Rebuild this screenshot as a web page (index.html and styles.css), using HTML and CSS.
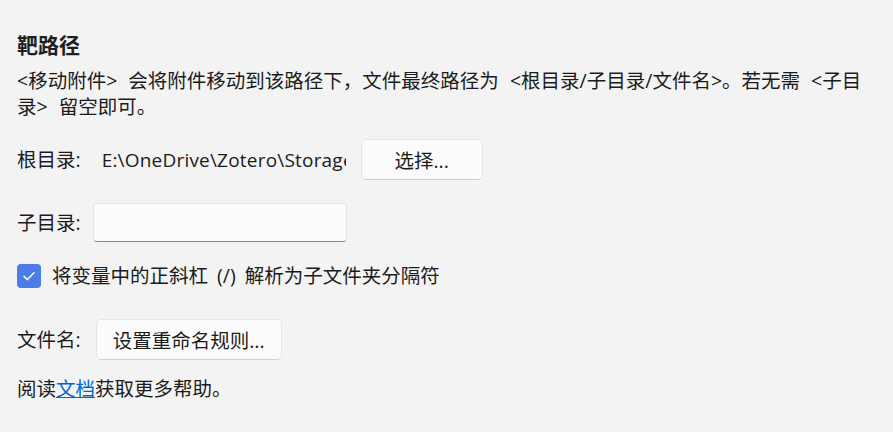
FILE: index.html
```html
<!DOCTYPE html>
<html lang="zh">
<head>
<meta charset="utf-8">
<link rel="stylesheet" href="styles.css">
</head>
<body>
<main class="pane">
  <h2 class="title">靶路径</h2>
  <p class="desc">&lt;移动附件&gt; 会将附件移动到该路径下，文件最终路径为 &lt;根目录/子目录/文件名&gt;。若无需 &lt;子目录&gt; 留空即可。</p>
  <div class="row row-root">
    <span class="label">根目录:</span>
    <span class="path">E:\OneDrive\Zotero\Storage</span>
    <button class="btn btn-choose">选择...</button>
  </div>
  <div class="row row-sub">
    <span class="label">子目录:</span>
    <input class="input" type="text">
  </div>
  <label class="row check-row">
    <span class="checkbox">
      <svg width="16" height="16" viewBox="0 0 16 16"><path d="M3 8.4 L6.4 11.6 L13 4.8" fill="none" stroke="#fff" stroke-width="1.5" stroke-linecap="round" stroke-linejoin="round"/></svg>
    </span>
    <span class="check-text">将变量中的正斜杠 (/) 解析为子文件夹分隔符</span>
  </label>
  <div class="row row-file">
    <span class="label">文件名:</span>
    <button class="btn btn-rename">设置重命名规则...</button>
  </div>
  <p class="help">阅读<a class="link" href="#">文档</a>获取更多帮助。</p>
</main>
</body>
</html>
```
FILE: styles.css
```css
html, body {
  margin: 0;
  padding: 0;
  background: #f3f3f3;
}
body {
  font-family: "Open Sans", "Noto Sans CJK SC", sans-serif;
  font-size: 19.5px;
  word-spacing: 4px;
  color: #1b1b1b;
}
.pane {
  padding: 32px 17px 0 17px;
  display: flex;
  flex-direction: column;
}
.title {
  margin: 0;
  font-size: 21px;
  font-weight: 700;
  line-height: 26px;
  color: #1f1f1f;
}
.desc {
  margin: 10px 0 0 0;
  line-height: 26px;
  width: 862px;
  word-spacing: 6px;
}
.row {
  display: flex;
  align-items: center;
}
.label {
  white-space: nowrap;
  line-height: 26px;
}
.row-root {
  margin-top: 19px;
}
.path {
  margin-left: 21px;
  width: 244px;
  overflow: hidden;
  white-space: nowrap;
  font-size: 19px;
  letter-spacing: 0.2px;
}
.btn {
  font-family: inherit;
  font-size: 19.5px;
  color: #1b1b1b;
  background: #fbfbfb;
  border: 1px solid #e5e5e5;
  border-bottom-color: #d0d0d0;
  border-radius: 5px;
  height: 41px;
  padding: 0 10px;
  cursor: default;
}
.btn-choose {
  margin-left: 15px;
  width: 122px;
}
.row-sub {
  margin-top: 23px;
}
.input {
  margin-left: 12px;
  width: 254px;
  height: 39px;
  box-sizing: border-box;
  background: #fbfbfb;
  border: 1px solid #e5e5e5;
  border-bottom: 1px solid #8a8a8a;
  border-radius: 4px;
  padding: 0 10px;
  outline: none;
}
.check-row {
  margin-top: 21px;
}
.checkbox {
  width: 24px;
  height: 24px;
  border-radius: 4px;
  background: #4a7be6;
  display: flex;
  align-items: center;
  justify-content: center;
}
.check-text {
  margin-left: 11px;
  line-height: 26px;
}
.row-file {
  margin-top: 30px;
}
.btn-rename {
  margin-left: 15px;
  width: 186px;
}
.help {
  margin: 16px 0 0 0;
  line-height: 26px;
}
.link {
  color: #0066cc;
  text-decoration: underline;
}
```
